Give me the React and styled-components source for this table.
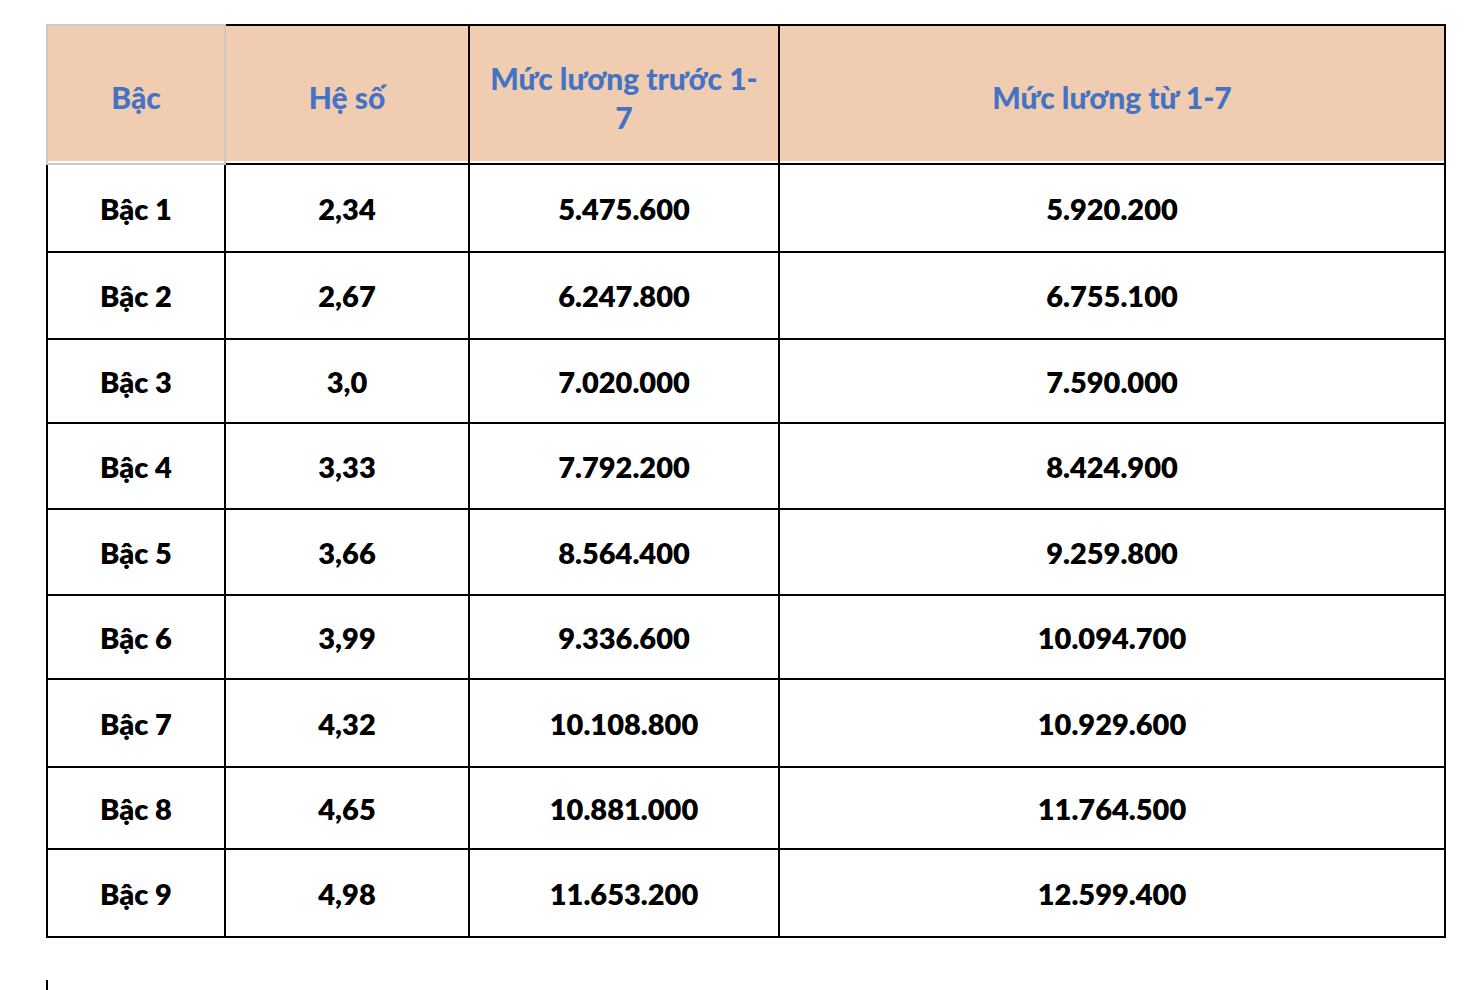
import React from 'react';
import styled, { createGlobalStyle } from 'styled-components';

const GlobalStyles = createGlobalStyle`
  html, body {
    margin: 0;
    background: #ffffff;
  }
  body {
    font-family: Lato, "Noto Sans", sans-serif;
  }
`;

const Page = styled.div`
  padding: 24px 0 0 46px;
  width: 1474px;
  height: 990px;
  box-sizing: border-box;
  overflow: hidden;
`;

const Table = styled.table`
  border-collapse: collapse;
  table-layout: fixed;
  width: 1398px;
`;

const HeadCell = styled.th`
  height: 139px;
  padding: 6px 4px 0;
  border: 2px solid ${(p) => (p.$muted ? '#c9c9c9' : '#000')};
  background: linear-gradient(#f0ccb0, #f0ccb0) top / 100% calc(100% - 2px) no-repeat;
  color: #4472c4;
  font-size: 30px;
  font-weight: 900;
  line-height: 39px;
  text-align: center;
  vertical-align: middle;
  box-sizing: border-box;
`;

const Row = styled.tr`
  height: ${(p) => p.$h}px;
`;

const Cell = styled.td`
  padding: 0 6px;
  border: 2px solid #000;
  color: #000;
  font-size: 29px;
  font-weight: 800;
  text-align: center;
  vertical-align: middle;
`;

const NextTableEdge = styled.div`
  margin-top: 42px;
  width: 2px;
  height: 12px;
  background: #000;
`;

const rows = [
  ['Bậc 1', '2,34', '5.475.600', '5.920.200', 88],
  ['Bậc 2', '2,67', '6.247.800', '6.755.100', 87],
  ['Bậc 3', '3,0', '7.020.000', '7.590.000', 84],
  ['Bậc 4', '3,33', '7.792.200', '8.424.900', 86],
  ['Bậc 5', '3,66', '8.564.400', '9.259.800', 86],
  ['Bậc 6', '3,99', '9.336.600', '10.094.700', 84],
  ['Bậc 7', '4,32', '10.108.800', '10.929.600', 88],
  ['Bậc 8', '4,65', '10.881.000', '11.764.500', 82],
  ['Bậc 9', '4,98', '11.653.200', '12.599.400', 88],
];

export default function App() {
  return (
    <Page>
      <GlobalStyles />
      <Table>
        <colgroup>
          <col style={{ width: 178 }} />
          <col style={{ width: 244 }} />
          <col style={{ width: 310 }} />
          <col style={{ width: 666 }} />
        </colgroup>
        <thead>
          <tr>
            <HeadCell $muted>Bậc</HeadCell>
            <HeadCell>Hệ số</HeadCell>
            <HeadCell>
              Mức lương trước 1-
              <br />7
            </HeadCell>
            <HeadCell>Mức lương từ 1-7</HeadCell>
          </tr>
        </thead>
        <tbody>
          {rows.map(([level, coef, before, after, h]) => (
            <Row key={level} $h={h}>
              <Cell>{level}</Cell>
              <Cell>{coef}</Cell>
              <Cell>{before}</Cell>
              <Cell>{after}</Cell>
            </Row>
          ))}
        </tbody>
      </Table>
      <NextTableEdge />
    </Page>
  );
}
